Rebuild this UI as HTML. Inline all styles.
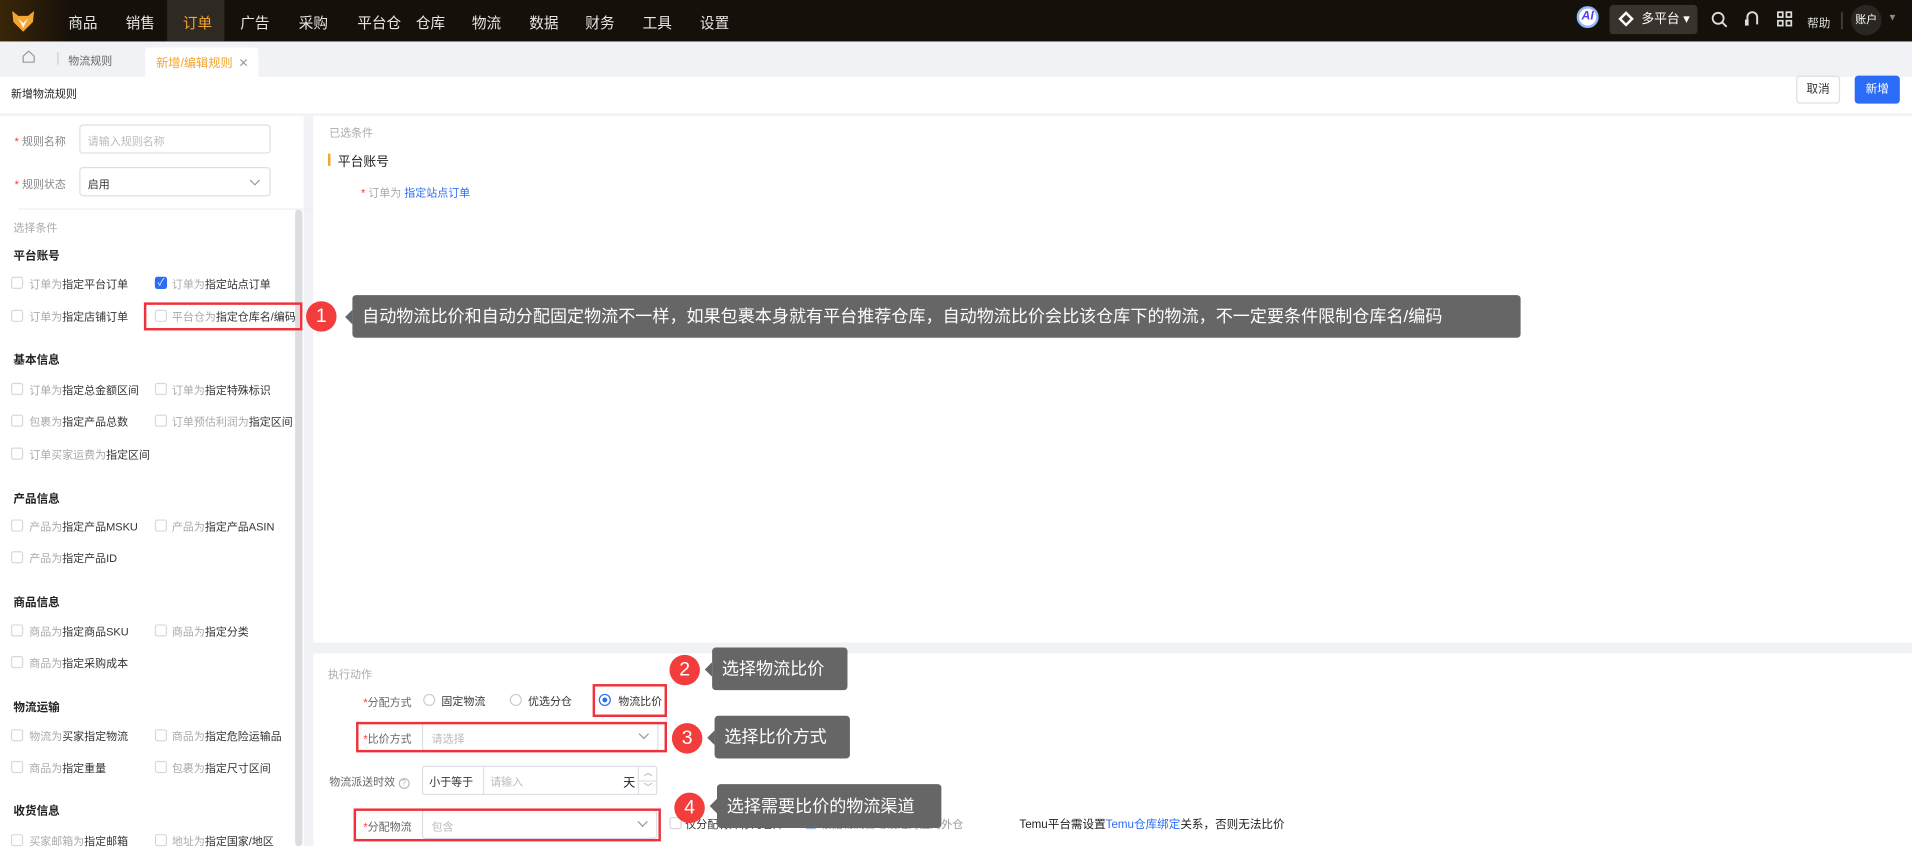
<!DOCTYPE html>
<html><head><meta charset="utf-8">
<style>
*{margin:0;padding:0;box-sizing:border-box}
html,body{width:1912px;height:846px;overflow:hidden;background:#fff}
#w{position:absolute;left:0;top:0;width:1568px;height:694px;transform:scale(1.2194);transform-origin:0 0;font-family:"Liberation Sans","Noto Sans CJK SC",sans-serif;color:#333;font-size:9px;background:#f0f2f5}
.a{position:absolute;white-space:nowrap}
.nav{left:0;top:0;width:1568px;height:34px;background:linear-gradient(90deg,#3a2608 0,#15100a 60px,#15100a 100%)}
.nav .m{position:absolute;top:10px;color:#e8e6e3;font-size:12px}
.cb{position:absolute;width:10px;height:10px;border:1px solid #d9d9d9;border-radius:2px;background:#fff}
.g{color:#aaa}
.h{font-weight:bold;font-size:9.5px;color:#222}
.tip{position:absolute;background:#666;color:#fff;border-radius:3px;font-size:14px;line-height:35px;padding-left:8px;white-space:nowrap}
.tip:before{content:"";position:absolute;left:-6px;top:12px;border:6px solid transparent;border-left:0;border-right-color:#666}
.num{position:absolute;width:25px;height:25px;border-radius:50%;background:#f33c3c;color:#fff;font-size:16px;text-align:center;line-height:25px}
.rb{position:absolute;border:2px solid #f0303a}
.inp{position:absolute;border:1px solid #dcdfe6;border-radius:3px;background:#fff}
.rad{position:absolute;width:10px;height:10px;border:1px solid #ccc;border-radius:50%;background:#fff}
.chev{position:absolute;width:6px;height:6px;border-right:1px solid #999;border-bottom:1px solid #999;transform:rotate(45deg)}
</style></head><body><div id="w">
<div class="a nav">
 <svg style="position:absolute;left:8px;top:6px" width="22" height="22" viewBox="0 0 22 22"><path d="M2 3 L7 7 L15 7 L20 3 L19 12 L11 20 L3 12 Z" fill="#f3a531"/><path d="M7 9 L11 13 L15 9 L11 17 Z" fill="#fff" opacity=".85"/></svg>
 <div style="position:absolute;left:137px;top:0;width:47px;height:34px;background:#2e2923"></div>
 <span class="m" style="left:56px">商品</span><span class="m" style="left:103px">销售</span><span class="m" style="left:150px;color:#f3a531">订单</span><span class="m" style="left:197px">广告</span><span class="m" style="left:245px">采购</span><span class="m" style="left:293px">平台仓</span><span class="m" style="left:341px">仓库</span><span class="m" style="left:387px">物流</span><span class="m" style="left:434px">数据</span><span class="m" style="left:480px">财务</span><span class="m" style="left:527px">工具</span><span class="m" style="left:574px">设置</span>
 <div style="position:absolute;left:1293px;top:5px;width:18px;height:18px;border-radius:50%;background:#fff;border:2px solid #8fb5ff;color:#5a3ef0;font-weight:bold;font-size:10px;text-align:center;line-height:14px;font-style:italic">AI</div>
 <div style="position:absolute;left:1320px;top:4px;width:72px;height:24px;background:#38332d;border-radius:3px;color:#fff;font-size:10.5px;line-height:24px;padding-left:26px">多平台 ▾<span style="position:absolute;left:9px;top:7px;width:9px;height:9px;border:2px solid #fff;transform:rotate(45deg)"></span></div>
 <svg style="position:absolute;left:1403px;top:9px" width="14" height="14" viewBox="0 0 14 14"><circle cx="6" cy="6" r="4.5" stroke="#ddd" stroke-width="1.5" fill="none"/><path d="M9.5 9.5L13 13" stroke="#ddd" stroke-width="1.5"/></svg>
 <svg style="position:absolute;left:1430px;top:8px" width="14" height="16" viewBox="0 0 14 16"><path d="M3 9V6a4 4 0 0 1 8 0v6" stroke="#ddd" stroke-width="1.6" fill="none"/><rect x="1" y="8" width="3" height="5" fill="#ddd"/></svg>
 <svg style="position:absolute;left:1457px;top:9px" width="13" height="13" viewBox="0 0 13 13" fill="none" stroke="#ddd" stroke-width="1.4"><rect x="1" y="1" width="4" height="4"/><rect x="8" y="1" width="4" height="4"/><rect x="1" y="8" width="4" height="4"/><rect x="8" y="8" width="4" height="4"/></svg>
 <span class="a" style="left:1482px;top:11px;color:#ddd;font-size:9.5px">帮助</span>
 <div style="position:absolute;left:1510px;top:10px;width:1px;height:14px;background:#555"></div>
 <div style="position:absolute;left:1518px;top:4px;width:25px;height:25px;border-radius:50%;background:#2a2622;color:#fff;font-size:9px;text-align:center;line-height:25px">账户</div>
 <span class="a" style="left:1548px;top:10px;color:#888;font-size:8px">▼</span>
</div>
<svg style="position:absolute;left:18px;top:41px" width="11" height="11" viewBox="0 0 11 11"><path d="M1 5L5.5 1L10 5V10H1Z" fill="none" stroke="#999"/></svg>
<div style="position:absolute;left:47px;top:43px;width:1px;height:10px;background:#ccc"></div>
<span class="a" style="left:56px;top:43px;color:#666">物流规则</span>
<div style="position:absolute;left:119px;top:39px;width:93px;height:24px;background:#fff;border-radius:3px 3px 0 0"></div>
<span class="a" style="left:128px;top:43px;color:#f3a531;font-size:10px">新增/编辑规则 <span style="color:#999;margin-left:2px">✕</span></span>
<div style="position:absolute;left:0;top:63px;width:1568px;height:30px;background:#fff"></div>
<span class="a" style="left:9px;top:70px;font-size:9px;color:#222">新增物流规则</span>
<div style="position:absolute;left:1473px;top:62px;width:36px;height:23px;border:1px solid #dcdfe6;border-radius:3px;background:#fff;font-size:9.5px;text-align:center;line-height:21px">取消</div>
<div style="position:absolute;left:1521px;top:62px;width:37px;height:23px;border-radius:3px;background:#2b6cf6;color:#fff;font-size:9.5px;text-align:center;line-height:23px">新增</div>
<div style="position:absolute;left:0;top:95px;width:249px;height:600px;background:#fff"></div>
<div style="position:absolute;left:242px;top:172px;width:6px;height:522px;background:#dcdde0;border-radius:3px"></div>
<span class="a" style="left:12px;top:109px;color:#888"><span style="color:#f33">*</span> 规则名称</span>
<div class="inp" style="left:65px;top:102px;width:157px;height:24px"><span class="a" style="left:6px;top:6px;color:#bbb">请输入规则名称</span></div>
<span class="a" style="left:12px;top:144px;color:#888"><span style="color:#f33">*</span> 规则状态</span>
<div class="inp" style="left:65px;top:137px;width:157px;height:24px"><span class="a" style="left:6px;top:6px;color:#333">启用</span><div class="chev" style="left:140px;top:7px"></div></div>
<div style="position:absolute;left:15px;top:171px;width:274px;height:1px;background:#eee"></div>
<span class="a g" style="left:11px;top:180px">选择条件</span>
<span class="a h" style="left:11px;top:202px">平台账号</span>
<div class="cb" style="left:9px;top:227px"></div><span class="a" style="left:24px;top:226px"><span class="g">订单为</span>指定平台订单</span>
<div class="cb" style="left:127px;top:227px;background:#2b6cf6;border-color:#2b6cf6;color:#fff;font-size:8px;line-height:8px;text-align:center">✓</div><span class="a" style="left:141px;top:226px"><span class="g">订单为</span>指定站点订单</span>
<div class="cb" style="left:9px;top:254px"></div><span class="a" style="left:24px;top:253px"><span class="g">订单为</span>指定店铺订单</span>
<div class="cb" style="left:127px;top:254px"></div><span class="a" style="left:141px;top:253px"><span class="g">平台仓为</span>指定仓库名/编码</span>
<div class="rb" style="left:118px;top:248px;width:130px;height:23px"></div>
<span class="a h" style="left:11px;top:287px">基本信息</span>
<div class="cb" style="left:9px;top:314px"></div><span class="a" style="left:24px;top:313px"><span class="g">订单为</span>指定总金额区间</span>
<div class="cb" style="left:127px;top:314px"></div><span class="a" style="left:141px;top:313px"><span class="g">订单为</span>指定特殊标识</span>
<div class="cb" style="left:9px;top:340px"></div><span class="a" style="left:24px;top:339px"><span class="g">包裹为</span>指定产品总数</span>
<div class="cb" style="left:127px;top:340px"></div><span class="a" style="left:141px;top:339px"><span class="g">订单预估利润为</span>指定区间</span>
<div class="cb" style="left:9px;top:367px"></div><span class="a" style="left:24px;top:366px"><span class="g">订单买家运费为</span>指定区间</span>
<span class="a h" style="left:11px;top:401px">产品信息</span>
<div class="cb" style="left:9px;top:426px"></div><span class="a" style="left:24px;top:425px"><span class="g">产品为</span>指定产品MSKU</span>
<div class="cb" style="left:127px;top:426px"></div><span class="a" style="left:141px;top:425px"><span class="g">产品为</span>指定产品ASIN</span>
<div class="cb" style="left:9px;top:452px"></div><span class="a" style="left:24px;top:451px"><span class="g">产品为</span>指定产品ID</span>
<span class="a h" style="left:11px;top:486px">商品信息</span>
<div class="cb" style="left:9px;top:512px"></div><span class="a" style="left:24px;top:511px"><span class="g">商品为</span>指定商品SKU</span>
<div class="cb" style="left:127px;top:512px"></div><span class="a" style="left:141px;top:511px"><span class="g">商品为</span>指定分类</span>
<div class="cb" style="left:9px;top:538px"></div><span class="a" style="left:24px;top:537px"><span class="g">商品为</span>指定采购成本</span>
<span class="a h" style="left:11px;top:572px">物流运输</span>
<div class="cb" style="left:9px;top:598px"></div><span class="a" style="left:24px;top:597px"><span class="g">物流为</span>买家指定物流</span>
<div class="cb" style="left:127px;top:598px"></div><span class="a" style="left:141px;top:597px"><span class="g">商品为</span>指定危险运输品</span>
<div class="cb" style="left:9px;top:624px"></div><span class="a" style="left:24px;top:623px"><span class="g">商品为</span>指定重量</span>
<div class="cb" style="left:127px;top:624px"></div><span class="a" style="left:141px;top:623px"><span class="g">包裹为</span>指定尺寸区间</span>
<span class="a h" style="left:11px;top:657px">收货信息</span>
<div class="cb" style="left:9px;top:684px"></div><span class="a" style="left:24px;top:683px"><span class="g">买家邮箱为</span>指定邮箱</span>
<div class="cb" style="left:127px;top:684px"></div><span class="a" style="left:141px;top:683px"><span class="g">地址为</span>指定国家/地区</span>
<div style="position:absolute;left:257px;top:95px;width:1311px;height:432px;background:#fff"></div>
<div style="position:absolute;left:257px;top:536px;width:1311px;height:158px;background:#fff"></div>
<span class="a g" style="left:270px;top:102px;font-size:9px">已选条件</span>
<div style="position:absolute;left:269px;top:126px;width:2px;height:10px;background:#f3a531"></div>
<span class="a" style="left:277px;top:125px;font-size:10.5px;color:#222">平台账号</span>
<span class="a" style="left:296px;top:151px;font-size:9px"><span style="color:#f33">*</span> <span class="g">订单为</span> <span style="color:#2b6cf6">指定站点订单</span></span>
<div class="num" style="left:251px;top:247px">1</div>
<div class="tip" style="left:289px;top:242px;width:958px">自动物流比价和自动分配固定物流不一样，如果包裹本身就有平台推荐仓库，自动物流比价会比该仓库下的物流，不一定要条件限制仓库名/编码</div>
<span class="a g" style="left:269px;top:546px;font-size:9px">执行动作</span>
<span class="a" style="left:298px;top:569px;color:#666;font-size:9px"><span style="color:#f33">*</span>分配方式</span>
<div class="rad" style="left:347px;top:569px"></div><span class="a" style="left:362px;top:568px;font-size:9px">固定物流</span>
<div class="rad" style="left:418px;top:569px"></div><span class="a" style="left:433px;top:568px;font-size:9px">优选分仓</span>
<div class="rad" style="left:491px;top:569px;border-color:#2b6cf6"><div style="position:absolute;left:2px;top:2px;width:4px;height:4px;border-radius:50%;background:#2b6cf6"></div></div><span class="a" style="left:507px;top:568px;font-size:9px">物流比价</span>
<div class="rb" style="left:486px;top:561px;width:61px;height:27px"></div>
<div class="num" style="left:549px;top:537px">2</div>
<div class="tip" style="left:584px;top:531px;width:111px">选择物流比价</div>
<span class="a" style="left:298px;top:599px;color:#666;font-size:9px"><span style="color:#f33">*</span>比价方式</span>
<div class="inp" style="left:346px;top:592px;width:194px;height:24px"><span class="a" style="left:7px;top:6px;color:#bbb;font-size:9px">请选择</span><div class="chev" style="left:178px;top:6px"></div></div>
<div class="rb" style="left:292px;top:592px;width:255px;height:25px"></div>
<div class="num" style="left:551px;top:593px">3</div>
<div class="tip" style="left:586px;top:587px;width:111px">选择比价方式</div>
<span class="a" style="left:270px;top:634px;color:#666;font-size:9px">物流派送时效 <span style="display:inline-block;width:9px;height:9px;border:1px solid #bbb;border-radius:50%;font-size:7px;line-height:8px;text-align:center;color:#bbb">?</span></span>
<div class="inp" style="left:346px;top:628px;width:193px;height:24px;border-radius:2px"></div>
<div style="position:absolute;left:396px;top:628px;width:1px;height:24px;background:#dcdfe6"></div>
<div style="position:absolute;left:523px;top:628px;width:1px;height:24px;background:#dcdfe6"></div>
<div style="position:absolute;left:524px;top:640px;width:15px;height:1px;background:#dcdfe6"></div>
<span class="a" style="left:352px;top:634px;font-size:9px">小于等于</span>
<span class="a" style="left:402px;top:634px;font-size:9px;color:#bbb">请输入</span>
<span class="a" style="left:511px;top:633px;font-size:10px;color:#222">天</span>
<span class="a" style="left:528px;top:629px;font-size:7px;color:#999">︿</span><span class="a" style="left:528px;top:641px;font-size:7px;color:#999">﹀</span>
<span class="a" style="left:298px;top:671px;color:#666;font-size:9px"><span style="color:#f33">*</span>分配物流</span>
<div class="inp" style="left:346px;top:664px;width:193px;height:24px"><span class="a" style="left:7px;top:6px;color:#bbb;font-size:9px">包含</span><div class="chev" style="left:177px;top:6px"></div></div>
<div class="rb" style="left:290px;top:663px;width:252px;height:27px"></div>
<div class="cb" style="left:549px;top:670px"></div><span class="a" style="left:562px;top:669px;font-size:9px">仅分配有库存的仓库</span>
<div class="cb" style="left:660px;top:670px;background:#9fb9ef;border-color:#9fb9ef"></div><span class="a" style="left:673px;top:669px;font-size:9px;color:#999">根据物流自动设定对应海外仓</span>
<span class="a" style="left:836px;top:668px;font-size:9.5px;color:#222">Temu平台需设置<span style="color:#2b6cf6">Temu仓库绑定</span>关系，否则无法比价</span>
<div class="num" style="left:553px;top:650px">4</div>
<div class="tip" style="left:588px;top:643px;width:184px;line-height:36px">选择需要比价的物流渠道</div>
</div></body></html>
